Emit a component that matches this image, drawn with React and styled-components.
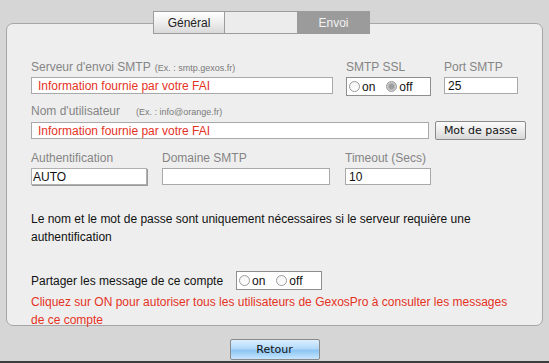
import React from "react";
import styled, { createGlobalStyle, css } from "styled-components";

const Global = createGlobalStyle`
  html, body { margin: 0; padding: 0; background: #d6d6d6; }
  body { font-family: "Liberation Sans", Arial, sans-serif; font-size: 12px; color: #111; }
  * { box-sizing: border-box; }
`;

const Page = styled.div`
  width: 549px;
  height: 363px;
  padding-top: 11px;
  display: flex;
  flex-direction: column;
  background: #d6d6d6;
  border-bottom: 2px solid #3c3c3c;
`;

const TabBar = styled.div`
  display: flex;
  margin-left: 154px;
  margin-bottom: -11px;
  position: relative;
  z-index: 1;
`;

const tabVariants = {
  general: css`
    background: linear-gradient(#ffffff, #f0f0f0 45%, #d9d9d9);
    color: #222;
  `,
  blank: css`
    background: #ececec;
  `,
  active: css`
    background: #9b9b9b;
    border-color: #9b9b9b;
    color: #f2f2f2;
  `,
};

const Tab = styled.div`
  width: ${(p) => p.$w}px;
  height: 23px;
  margin-left: -1px;
  border: 1px solid #9c9c9c;
  display: flex;
  align-items: center;
  justify-content: center;
  font-size: 12px;
  ${(p) => tabVariants[p.$variant]}
`;

const Panel = styled.div`
  margin: 0 6px;
  height: 303px;
  border: 1px solid #a6a6a6;
  border-radius: 7px;
  background: #eeeeee;
  padding: 36px 0 0 24px;
  display: flex;
  flex-direction: column;
`;

const Row = styled.div`
  display: flex;
  align-items: flex-start;
  gap: ${(p) => p.$gap || 13}px;
  margin-top: ${(p) => p.$mt || 0}px;
`;

const Field = styled.div`
  display: flex;
  flex-direction: column;
`;

const Label = styled.div`
  height: 14px;
  line-height: 14px;
  margin-bottom: 3px;
  color: #858585;
  font-size: 12px;
  white-space: nowrap;
`;

const Hint = styled.span`
  font-size: 9px;
  color: #7a7a7a;
  margin-left: ${(p) => p.$ml || 4}px;
`;

const Input = styled.input`
  width: ${(p) => p.$w}px;
  height: 17px;
  border: 1px solid #a9a9a9;
  background: #fff;
  font-family: "Liberation Sans", Arial, sans-serif;
  font-size: 12px;
  padding: 0 0 0 ${(p) => p.$pl ?? 3}px;
  margin: 0;
  color: ${(p) => (p.$red ? "#e5321f" : "#111")};
  outline: none;
  ${(p) =>
    p.$select &&
    css`
      border-color: #b0b0b0;
      box-shadow: 1px 1px 0 #9a9a9a;
      padding-left: 1px;
    `}
`;

const InlineRow = styled.div`
  display: flex;
  align-items: center;
  gap: 6px;
`;

const RadioBox = styled.div`
  width: ${(p) => p.$w}px;
  height: 19px;
  border: 1px solid #8e8e8e;
  background: #fff;
  display: flex;
  align-items: center;
  padding-left: 2px;
  gap: 11px;
`;

const Option = styled.label`
  display: flex;
  align-items: center;
  gap: 2px;
  font-size: 12px;
  color: #111;
`;

const Circle = styled.span`
  width: 11px;
  height: 11px;
  border-radius: 50%;
  border: 1px solid #9a9a9a;
  background: ${(p) =>
    p.$checked
      ? "radial-gradient(circle, #9e9e9e 0 2.5px, #c9c9c9 3.5px, #d8d8d8 100%)"
      : "linear-gradient(#f4f4f4, #ffffff)"};
`;

const Button = styled.button`
  width: ${(p) => p.$w}px;
  height: ${(p) => p.$h}px;
  margin: 0;
  padding: 0;
  border: 1px solid #8a8a8a;
  border-radius: 2px;
  font-family: "DejaVu Sans", Verdana, sans-serif;
  font-size: 11px;
  color: #111;
  background: ${(p) =>
    p.$blue
      ? "linear-gradient(#dcefff, #b2d9fa 45%, #8ec5f2 55%, #c6e6ff)"
      : "linear-gradient(#fbfbfb, #ebebeb 50%, #d8d8d8)"};
`;

const Note = styled.p`
  margin: ${(p) => p.$mt}px 0 0;
  width: 486px;
  line-height: 18px;
  font-size: 12px;
  color: ${(p) => (p.$red ? "#e5321f" : "#111")};
`;

const ShareRow = styled.div`
  display: flex;
  align-items: center;
  margin-top: 25px;
`;

const ShareLabel = styled.span`
  width: 205px;
  font-size: 12px;
  color: #111;
`;

const Footer = styled.div`
  display: flex;
  justify-content: center;
  padding-top: 13px;
`;

function Radio({ w, checked }) {
  return (
    <RadioBox $w={w}>
      <Option>
        <Circle $checked={checked === "on"} />
        on
      </Option>
      <Option>
        <Circle $checked={checked === "off"} />
        off
      </Option>
    </RadioBox>
  );
}

export default function App() {
  return (
    <>
      <Global />
      <Page>
        <TabBar>
          <Tab $w={72} $variant="general">Général</Tab>
          <Tab $w={74} $variant="blank" />
          <Tab $w={73} $variant="active">Envoi</Tab>
        </TabBar>
        <Panel>
          <Row>
            <Field>
              <Label>
                Serveur d'envoi SMTP<Hint>(Ex. : smtp.gexos.fr)</Hint>
              </Label>
              <Input $w={302} $pl={6} $red readOnly defaultValue="Information fournie par votre FAI" />
            </Field>
            <Field>
              <Label>SMTP SSL</Label>
              <Radio w={85} checked="off" />
            </Field>
            <Field>
              <Label>Port SMTP</Label>
              <Input $w={74} readOnly defaultValue="25" />
            </Field>
          </Row>
          <Field style={{ marginTop: 8 }}>
            <Label>
              Nom d'utilisateur<Hint $ml={16}>(Ex. : info@orange.fr)</Hint>
            </Label>
            <InlineRow>
              <Input $w={398} $pl={6} $red readOnly defaultValue="Information fournie par votre FAI" />
              <Button $w={91} $h={19}>Mot de passe</Button>
            </InlineRow>
          </Field>
          <Row $mt={11} $gap={15}>
            <Field>
              <Label>Authentification</Label>
              <Input $w={116} $select readOnly defaultValue="AUTO" />
            </Field>
            <Field>
              <Label>Domaine SMTP</Label>
              <Input $w={168} readOnly defaultValue="" />
            </Field>
            <Field>
              <Label>Timeout (Secs)</Label>
              <Input $w={86} readOnly defaultValue="10" />
            </Field>
          </Row>
          <Note $mt={25}>
            Le nom et le mot de passe sont uniquement nécessaires si le serveur requière une authentification
          </Note>
          <ShareRow>
            <ShareLabel>Partager les message de ce compte</ShareLabel>
            <Radio w={86} checked={null} />
          </ShareRow>
          <Note $mt={3} $red>
            Cliquez sur ON pour autoriser tous les utilisateurs de GexosPro à consulter les messages de ce compte
          </Note>
        </Panel>
        <Footer>
          <Button $w={90} $h={21} $blue>Retour</Button>
        </Footer>
      </Page>
    </>
  );
}
